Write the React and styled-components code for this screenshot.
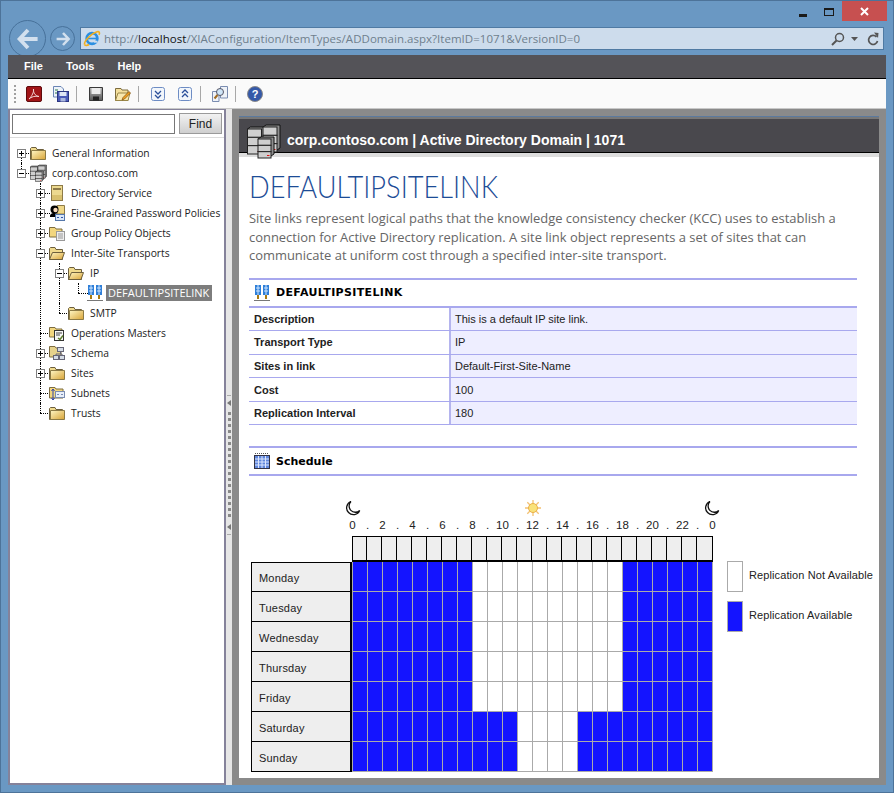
import React from 'react';
import styled, { createGlobalStyle } from 'styled-components';

const GlobalStyle = createGlobalStyle`
  html, body { margin: 0; padding: 0; background: #6a98c3; }
  * { box-sizing: border-box; }
`;

const Window = styled.div`
  width: 894px;
  height: 793px;
  background: #6a98c3;
  border: 1px solid #4d7399;
  overflow: hidden;
  font-family: "Liberation Sans", Arial, sans-serif;
`;

const TitleBar = styled.div`
  height: 20px;
  display: flex;
  justify-content: flex-end;
  padding-right: 6px;
`;

const WinButton = styled.div`
  width: ${p => p.$w}px;
  height: 20px;
  padding-top: ${p => p.$pad || 0}px;
  display: flex;
  align-items: center;
  justify-content: center;
  background: ${p => p.$bg || 'transparent'};
`;

const NavBar = styled.div`
  height: 34px;
  display: flex;
  align-items: flex-start;
  padding-left: 8px;
`;

const RoundButton = styled.div`
  width: ${p => p.$size}px;
  height: ${p => p.$size}px;
  flex: none;
  margin-top: ${p => p.$top}px;
  margin-right: ${p => p.$right}px;
  border: 1px solid #47719a;
  border-radius: 50%;
  display: flex;
  align-items: center;
  justify-content: center;
`;

const AddressBar = styled.div`
  width: 804px;
  height: 23px;
  margin-top: 6px;
  background: #cddcec;
  border: 1px solid #4f7aa3;
  display: flex;
  align-items: center;
  padding: 0 4px 0 2px;
`;

const Url = styled.div`
  flex: 1;
  margin-left: 3px;
  font-family: "Open Sans", sans-serif;
  font-size: 11.5px;
  letter-spacing: 0.03px;
  color: #6f7f8c;
  white-space: nowrap;
  b { font-weight: 400; color: #111; }
`;

const AppFrame = styled.div`
  position: relative;
  width: 878px;
  margin-left: 7px;
`;

const MenuBar = styled.div`
  height: 24px;
  background: #545358;
  border-bottom: 1px solid #000;
  display: flex;
  align-items: center;
  gap: 23px;
  padding: 0 0 2px 16px;
  color: #fff;
  font-size: 11px;
  font-weight: 700;
`;

const Toolbar = styled.div`
  height: 30px;
  background: #fafafa;
  border-bottom: 1px solid #c8c8c8;
  display: flex;
  align-items: center;
  padding-left: 6px;
`;

const Grip = styled.div`
  width: 2px;
  height: 18px;
  margin-right: 4px;
  background: repeating-linear-gradient(to bottom, #a0a0a0 0 2px, transparent 2px 4px);
`;

const ToolSlot = styled.div`
  width: 27px;
  height: 18px;
  display: flex;
  align-items: center;
  justify-content: center;
`;

const ToolSep = styled.div`
  width: 1px;
  height: 16px;
  margin: 0 5px 0 2px;
  background: #a8a8a8;
`;

const Body = styled.div`
  height: 676px;
  display: flex;
  background: #8a8a8a;
`;

const LeftPanel = styled.div`
  width: 218px;
  flex: none;
  background: #fff;
  border: 2px solid #85829a;
  border-top-width: 1px;
  display: flex;
  flex-direction: column;
`;

const SearchRow = styled.div`
  height: 28px;
  flex: none;
  display: flex;
  align-items: flex-start;
  padding: 3px 0 0 2px;
  gap: 4px;
  border-bottom: 1px solid #dcdcdc;
`;

const SearchInput = styled.input`
  width: 163px;
  height: 20px;
  margin-top: 1px;
  border: 1px solid #777;
  background: #fff;
  outline: none;
`;

const FindButton = styled.button`
  width: 43px;
  height: 21px;
  padding: 0;
  border: 1px solid #9a9a9a;
  background: linear-gradient(#f2f2f2, #cfcfcf);
  font-family: "Liberation Sans", Arial, sans-serif;
  font-size: 12px;
  color: #222;
`;

const Tree = styled.div`
  padding: 5px 0 0 2px;
`;

const TreeRowBox = styled.div`
  height: 20px;
  display: flex;
  align-items: center;
`;

const Guide = styled.div`
  width: 19px;
  height: 20px;
  flex: none;
  position: relative;
  &::before {
    content: ${p => (p.$line ? '""' : 'none')};
    position: absolute;
    left: 9px;
    top: 0;
    bottom: 0;
    border-left: 1px dotted #000;
  }
`;

const Joint = styled.div`
  width: 19px;
  height: 20px;
  flex: none;
  position: relative;
  &::before {
    content: "";
    position: absolute;
    left: 9px;
    top: ${p => (p.$kind === 'first' ? '10px' : '0')};
    bottom: ${p => (p.$kind === 'last' ? '10px' : '0')};
    border-left: 1px dotted #000;
  }
  &::after {
    content: "";
    position: absolute;
    left: 9px;
    top: 10px;
    width: 10px;
    border-top: 1px dotted #000;
  }
`;

const Expander = styled.span`
  position: absolute;
  z-index: 1;
  left: 5px;
  top: 6px;
  width: 9px;
  height: 9px;
  background: #fff;
  border: 1px solid #808080;
  &::before {
    content: "";
    position: absolute;
    left: 1px;
    top: 3px;
    width: 5px;
    height: 1px;
    background: #000;
  }
  &::after {
    content: ${p => (p.$open ? 'none' : '""')};
    position: absolute;
    left: 3px;
    top: 1px;
    width: 1px;
    height: 5px;
    background: #000;
  }
`;

const TreeIcon = styled.div`
  width: 16px;
  height: 16px;
  flex: none;
  margin-left: -1px;
  position: relative;
  z-index: 1;
  display: flex;
`;

const TreeLabel = styled.div`
  margin-left: ${p => (p.$selected ? '3px' : '6px')};
  padding: ${p => (p.$selected ? '1px 3px 1px 2px' : '0')};
  font-family: "Open Sans", sans-serif;
  font-size: ${p => (p.$selected ? '11px' : '10.3px')};
  line-height: 14px;
  white-space: nowrap;
  color: ${p => (p.$selected ? '#fff' : '#222')};
  background: ${p => (p.$selected ? '#7d7d7d' : 'transparent')};
`;

const Splitter = styled.div`
  width: 6px;
  flex: none;
  background: #e6e6e6;
  display: flex;
  flex-direction: column;
  align-items: center;
  padding-top: 286px;
`;

const SplitDash = styled.div`
  width: 4px;
  height: 1px;
  background: #aaa;
  margin: ${p => p.$m};
`;

const SplitArrow = styled.div`
  width: 0;
  height: 0;
  border-top: 3px solid transparent;
  border-bottom: 3px solid transparent;
  border-right: 4px solid #777;
`;

const SplitDots = styled.div`
  width: 3px;
  height: 106px;
  margin: 6px 0;
  background: repeating-linear-gradient(to bottom, #888 0 3px, transparent 3px 6px);
`;

const MainArea = styled.div`
  flex: 1;
  min-width: 0;
  padding: 7px;
  display: flex;
`;

const MainPanel = styled.div`
  width: 640px;
  flex: none;
  background: #fff;
  border-top: 1px solid #5c7a9e;
  display: flex;
  flex-direction: column;
`;

const HeaderBand = styled.div`
  height: 40px;
  flex: none;
  background: #777;
  padding-top: 2px;
`;

const HeaderInner = styled.div`
  height: 34px;
  background: #49484d;
  border-bottom: 1px solid #000;
  display: flex;
  align-items: flex-start;
  padding: 6px 0 0 8px;
  color: #fff;
  font-size: 14px;
  font-weight: 700;
  white-space: nowrap;
  span { margin: 7px 0 0 8px; line-height: 16px; }
`;

const Strip = styled.div`
  height: 4px;
  background: #dddddd;
`;

const Content = styled.div`
  flex: 1;
  padding: 0 22px 0 10px;
`;

const PageTitle = styled.h1`
  margin: 10px 0 0;
  font-family: Lato, sans-serif;
  font-weight: 300;
  font-size: 32px;
  line-height: 38px;
  color: #1c4c96;
  white-space: nowrap;
  transform: scaleX(0.85);
  transform-origin: left center;
`;

const Intro = styled.p`
  margin: 4px 0 0;
  width: 600px;
  font-family: "Open Sans", sans-serif;
  font-size: 12.95px;
  line-height: 18.5px;
  color: #666;
`;

const SectionHead = styled.div`
  height: 30px;
  margin-top: ${p => p.$top}px;
  border-top: 2px solid #a8a8ee;
  border-bottom: 2px solid #a8a8ee;
  display: flex;
  align-items: center;
  gap: 6px;
  padding-left: 5px;
  font-family: "DejaVu Sans", sans-serif;
  font-weight: 700;
  font-size: 11px;
  letter-spacing: ${p => p.$track || 0}px;
  color: #000;
`;

const PropRow = styled.div`
  height: 23.6px;
  display: flex;
  border-bottom: 1px solid #a8a8ee;
  font-size: 11px;
  color: #222;
`;

const PropLabel = styled.div`
  width: 200px;
  flex: none;
  padding-left: 5px;
  display: flex;
  align-items: center;
  font-weight: 700;
`;

const PropValue = styled.div`
  flex: 1;
  background: #eeeeff;
  border-left: 2px solid #b4b4ee;
  padding-left: 4px;
  display: flex;
  align-items: center;
`;

const SchedulePane = styled.div`
  margin-top: 24px;
  display: flex;
`;

const TimeAxis = styled.div`
  width: 375px;
  margin-left: 96px;
`;

const SkyIcons = styled.div`
  display: flex;
  justify-content: space-between;
  align-items: center;
  height: 16px;
`;

const HourLabels = styled.div`
  display: flex;
  height: 14px;
  margin: 2px 0 4px;
`;

const HourLabel = styled.div`
  width: 15px;
  flex: none;
  text-align: center;
  font-size: 11.5px;
  line-height: 14px;
  color: #222;
  white-space: nowrap;
`;

const GridWrap = styled.div`
  margin-left: 2px;
`;

const ScheduleGrid = styled.div`
  display: grid;
  grid-template-columns: 101px repeat(23, 15px) 16px;
  grid-template-rows: 26px repeat(7, 30px);
`;

const Corner = styled.div``;

const HeadCell = styled.div`
  background: #eeeeee;
  border: 1px solid #000;
  border-left-width: ${p => (p.$first ? '1px' : '0')};
  border-bottom-width: 2px;
`;

const DayCell = styled.div`
  background: #eeeeee;
  border: 1px solid #000;
  border-top-width: ${p => (p.$first ? '1px' : '0')};
  border-right-width: 2px;
  padding: 2px 0 0 7px;
  display: flex;
  align-items: center;
  font-size: 11px;
  letter-spacing: 0.2px;
  color: #222;
`;

const SlotCell = styled.div`
  background: ${p => (p.$on ? '#1414ff' : '#fff')};
  border-left: 1px solid #aaa;
  border-right: ${p => (p.$last ? '1px solid #aaa' : '0')};
  border-bottom: 1px solid #aaa;
`;

const Legend = styled.div`
  margin-left: 7px;
  padding-top: 61px;
  display: flex;
  flex-direction: column;
  gap: 9px;
`;

const LegendRow = styled.div`
  display: flex;
  align-items: center;
  gap: 6px;
  font-size: 11px;
  letter-spacing: 0.1px;
  color: #222;
  white-space: nowrap;
  padding-bottom: 3px;
`;

const Swatch = styled.div`
  width: 16px;
  height: 31px;
  margin-bottom: -3px;
  background: ${p => (p.$on ? '#1414ff' : '#fff')};
  border: 1px solid #aaa;
`;

const OverflowSvg = styled.svg`
  flex: none;
  overflow: visible;
`;

const FlipSvg = styled.svg`
  transform: ${p => (p.$flip ? 'scaleX(-1)' : 'none')};
`;

const FolderIcon = ({ open }) => (
  <svg width="16" height="16" viewBox="0 0 16 16">
    <defs>
      <linearGradient id="fold" x1="0" y1="0" x2="1" y2="1">
        <stop offset="0" stopColor="#fff6c4" />
        <stop offset="1" stopColor="#d8a437" />
      </linearGradient>
    </defs>
    <path d="M.5 3.500V14.500H13.500V4.500H7L6 2.500H1.500z" fill="#efd98c" stroke="#6d5f3c" />
    {open
      ? <path d="M.5 14.500L3.500 7.500H15.500L13 14.500z" fill="url(#fold)" stroke="#6d5f3c" />
      : <path d="M1.500 5.500H15.500V14.500H1.500z" fill="url(#fold)" stroke="#8c7a45" />}
  </svg>
);

const BookIcon = () => (
  <svg width="16" height="16" viewBox="0 0 16 16">
    <rect x="2.500" y=".5" width="11" height="15" fill="#ecd98f" stroke="#8d7a48" />
    <rect x="4" y="3" width="8" height="2" fill="#8d7a48" />
    <rect x="3" y="10" width="10" height="5" fill="#d8c06e" />
  </svg>
);

const PersonIcon = () => (
  <svg width="16" height="16" viewBox="0 0 16 16">
    <path d="M8 .5H15.500V9H8z" fill="#f0d888" stroke="#8d7a48" />
    <circle cx="5.500" cy="4.500" r="4" fill="#000" />
    <circle cx="6.500" cy="5" r="2.200" fill="#f6d7b8" />
    <path d="M1 11C1 8.500 4 8 5.500 8S9 9 9 10V12H1z" fill="#000" />
    <rect x="6.500" y="9.500" width="9" height="6" fill="#d8e6f8" stroke="#5577aa" />
    <path d="M8 12.500h2M12 12.500h2" stroke="#3355aa" />
  </svg>
);

const PolicyIcon = () => (
  <svg width="16" height="16" viewBox="0 0 16 16">
    <path d="M.5 2.500H6L7 4H13V12H.5z" fill="#f2d67e" stroke="#7d6c3f" />
    <rect x="7.500" y="6.500" width="8" height="9" fill="#eeeeee" stroke="#999" />
    <path d="M9 9h5M9 11h5M9 13h5" stroke="#999" />
  </svg>
);

const OpsIcon = () => (
  <svg width="16" height="16" viewBox="0 0 16 16">
    <path d="M.5 2.500H6L7 4H13V12H.5z" fill="#f2d67e" stroke="#7d6c3f" />
    <rect x="5.500" y="5.500" width="9" height="10" fill="#f5f5f5" stroke="#333" />
    <path d="M7 8h6M7 10h4" stroke="#444" />
    <path d="M9 13l2 1.500 3-4" fill="none" stroke="#5a7a2a" strokeWidth="1.400" />
  </svg>
);

const SchemaIcon = () => (
  <svg width="16" height="16" viewBox="0 0 16 16">
    <path d="M.5 1.500H6L7 3H12V12H.5z" fill="#e6d28c" stroke="#7d6c3f" />
    <rect x="8.500" y="2.500" width="6" height="4" fill="#d5dce6" stroke="#667" />
    <rect x="4.500" y="10.500" width="5" height="4" fill="#d5dce6" stroke="#667" />
    <rect x="10.500" y="10.500" width="5" height="4" fill="#d5dce6" stroke="#667" />
    <path d="M11.500 7v2M7 10V9h6v1" fill="none" stroke="#667" />
  </svg>
);

const SubnetIcon = () => (
  <svg width="16" height="16" viewBox="0 0 16 16">
    <path d="M.5 2.500H6L7 4H14V13H.5z" fill="#f2d67e" stroke="#7d6c3f" />
    <rect x="6.500" y="6.500" width="9" height="6" fill="#e8effa" stroke="#7a8cb0" />
    <path d="M8 9.500h2M12 9.500h2" stroke="#7a8cb0" />
    <path d="M4 4v11M2.500 6L4 4l1.500 2M2.500 13L4 15l1.500-2" fill="none" stroke="#3344aa" />
  </svg>
);

const ServerStack = ({ x, y, w, h }) => {
  const t = h / 3;
  return (
    <g>
      <path d={`M${x} ${y + 2}l3-2h${w - 1}v${h - 2}l-3 2z`} fill="#8e8e8e" stroke="#111" strokeWidth="1" />
      {[0, 1, 2].map(i => (
        <rect key={i} x={x} y={y + 2 + i * t} width={w - 1} height={t} fill="#cfcfcf" stroke="#222" strokeWidth="1" />
      ))}
      <rect x={x + w - 5} y={y + h - 1} width="2.500" height="1" fill="#e01010" />
    </g>
  );
};

const ServerIcon = ({ size = 16 }) => (
  <OverflowSvg width={size} height={size} viewBox="0 0 32 32">
    <ServerStack x={.5} y={2} w={15} h={25} />
    <ServerStack x={16} y={0} w={15} h={25} />
    <ServerStack x={11} y={12} w={14} h={19} />
  </OverflowSvg>
);

const SiteLinkIcon = () => (
  <svg width="16" height="16" viewBox="0 0 16 16">
    <rect x="1" y="0" width="6" height="10" fill="#2f7fd8" />
    <rect x="9" y="0" width="6" height="10" fill="#2f7fd8" />
    <path d="M2 3h4M2 6h4M4 0v10M10 3h4M10 6h4M12 0v10" stroke="#cfe6ff" />
    <path d="M4 10v4M12 10v4" stroke="#a87a10" strokeWidth="2" />
    <path d="M0 15.500h16" stroke="#777" />
  </svg>
);

const CalendarIcon = () => (
  <svg width="16" height="16" viewBox="0 0 16 16">
    <rect x=".5" y="2.500" width="15" height="13" fill="#5f86dc" stroke="#334" />
    <path d="M1 .5h14" stroke="#555" strokeDasharray="1 1" />
    <path d="M1 6h14M1 9h14M1 12h14M4.500 3v12M8 3v12M11.500 3v12" stroke="#dbe6ff" />
  </svg>
);

const PdfIcon = () => (
  <svg width="16" height="16" viewBox="0 0 16 16">
    <rect x=".5" y=".5" width="15" height="15" rx="1.500" fill="#a11417" stroke="#5e0a0c" />
    <path d="M3 13C6 10 8 6 7.500 3 7 6 9 10 13 10.500 9 9.500 5 11 3 13z" fill="none" stroke="#f3d6d6" />
  </svg>
);

const SaveAllIcon = () => (
  <svg width="16" height="16" viewBox="0 0 16 16">
    <path d="M.5 .5H8L10.500 3V11H.5z" fill="#eef3fa" stroke="#6a85b5" />
    <path d="M2 4h3M2 7h2" stroke="#2d7a4a" />
    <rect x="4.500" y="5.500" width="11" height="10" fill="#4a5ab8" stroke="#2a3480" />
    <rect x="6.500" y="6" width="7" height="4" fill="#dfe6f5" />
    <rect x="7.500" y="12" width="5" height="3.500" fill="#aab6dd" />
  </svg>
);

const FloppyIcon = () => (
  <svg width="16" height="16" viewBox="0 0 16 16">
    <defs>
      <linearGradient id="flop" x1="0" y1="0" x2="0" y2="1">
        <stop offset="0" stopColor="#b5b5b5" />
        <stop offset="1" stopColor="#5a5a5a" />
      </linearGradient>
    </defs>
    <path d="M1.500 1.500H14.500V14.500H1.500z" fill="url(#flop)" stroke="#3a3a3a" />
    <rect x="3.500" y="2" width="9" height="6" fill="#ececec" />
    <rect x="5" y="10.500" width="6" height="4" fill="#222" />
  </svg>
);

const FolderEditIcon = () => (
  <svg width="16" height="16" viewBox="0 0 16 16">
    <path d="M.5 2.500H6L7 4H13V14.500H.5z" fill="#f4df9c" stroke="#7d6c3f" />
    <path d="M.5 14.500L3 7H15L13 14.500z" fill="#f8e7ae" stroke="#9a8748" />
    <path d="M7 14L8 11.500 14 5.500 15.500 7 9.500 13z" fill="#f0a020" stroke="#7a4a10" strokeWidth=".7" />
  </svg>
);

const ChevronBox = ({ up }) => (
  <svg width="14" height="14" viewBox="0 0 14 14">
    <rect x=".5" y=".5" width="13" height="13" rx="2" fill="#f2f6fb" stroke="#6d8cc4" />
    <path d={up ? 'M4 6l3-3 3 3M4 10l3-3 3 3' : 'M4 4l3 3 3-3M4 8l3 3 3-3'} fill="none" stroke="#2a4f9a" strokeWidth="1.300" />
  </svg>
);

const SearchDocIcon = () => (
  <svg width="16" height="16" viewBox="0 0 16 16">
    <path d="M8.500 .5H15.500V12H8.500z" fill="#eef2f8" stroke="#7a8cb0" />
    <path d="M.5 5.500H7V15.500H.5z" fill="#eef2f8" stroke="#7a8cb0" />
    <circle cx="8" cy="6" r="3.500" fill="#cfe5f7" stroke="#556" />
    <path d="M5.500 9L2.500 12.500" stroke="#a06a20" strokeWidth="2" />
  </svg>
);

const HelpIcon = () => (
  <svg width="16" height="16" viewBox="0 0 16 16">
    <circle cx="8" cy="8" r="7.500" fill="#3559a8" stroke="#8a8a8a" />
    <text x="8" y="12" textAnchor="middle" fontSize="11" fontWeight="700" fontFamily="Liberation Sans" fill="#fff">?</text>
  </svg>
);

const IeIcon = () => (
  <svg width="18" height="17" viewBox="0 0 18 17">
    <circle cx="9" cy="8.500" r="5.300" fill="none" stroke="#2b8fe0" strokeWidth="2.800" />
    <path d="M5 8.500h8" stroke="#2b8fe0" strokeWidth="1.600" />
    <path d="M11 11.700h3.500" stroke="#cddcec" strokeWidth="2" />
    <path d="M1.500 14.500C1 11 8 3.500 14 1.800c2.500-.6 3 1 2 3" fill="none" stroke="#f2b01e" strokeWidth="1.600" />
    <path d="M1.500 14.500C2 16 4.500 15.500 6 14.500" fill="none" stroke="#f2b01e" strokeWidth="1.600" />
  </svg>
);

const ArrowIcon = ({ size, right }) => (
  <FlipSvg width={size} height={size} viewBox="0 0 20 20" $flip={right}>
    <path d="M10 2.500L3 10l7 7.500M3.500 10H18" fill="none" stroke="#d3e0ee" strokeWidth="3.200" />
  </FlipSvg>
);

const Magnifier = () => (
  <svg width="14" height="14" viewBox="0 0 14 14">
    <circle cx="8.500" cy="5.500" r="4" fill="none" stroke="#555" strokeWidth="1.500" />
    <path d="M5.500 8.500L1 13" stroke="#555" strokeWidth="2" />
  </svg>
);

const Refresh = () => (
  <svg width="12" height="14" viewBox="0 0 12 14">
    <path d="M9.500 5A4.500 4.500 0 1 0 10.500 9" fill="none" stroke="#555" strokeWidth="1.700" />
    <path d="M7 .5L11.500 1 11 6z" fill="#555" />
  </svg>
);

const Caret = () => (
  <svg width="7" height="4" viewBox="0 0 7 4"><path d="M0 0h7L3.500 4z" fill="#555" /></svg>
);

const AddressTools = styled.div`
  display: flex;
  align-items: center;
  gap: 6px;
  svg:last-child { margin-left: 3px; }
`;

const Moon = () => (
  <svg width="16" height="16" viewBox="0 0 16 16">
    <path d="M6 1.500A6.800 6.800 0 1 0 14.700 10.500 6.200 6.200 0 0 1 6 1.500z" fill="#fff" stroke="#111" strokeWidth="1.300" />
  </svg>
);

const Sun = () => (
  <svg width="16" height="16" viewBox="0 0 16 16">
    <path d="M8 0v16M0 8h16M2.300 2.300l11.400 11.400M13.700 2.300L2.300 13.700" stroke="#f3c173" strokeWidth="1.300" />
    <circle cx="8" cy="8" r="4.500" fill="#f9e27a" stroke="#eab048" />
  </svg>
);

const treeData = [
  { guides: [], kind: 'first', box: '+', icon: <FolderIcon />, label: 'General Information' },
  { guides: [], kind: 'last', box: '-', icon: <ServerIcon />, label: 'corp.contoso.com' },
  { guides: [0], kind: 'tee', box: '+', icon: <BookIcon />, label: 'Directory Service' },
  { guides: [0], kind: 'tee', box: '+', icon: <PersonIcon />, label: 'Fine-Grained Password Policies' },
  { guides: [0], kind: 'tee', box: '+', icon: <PolicyIcon />, label: 'Group Policy Objects' },
  { guides: [0], kind: 'tee', box: '-', icon: <FolderIcon open />, label: 'Inter-Site Transports' },
  { guides: [0, 1], kind: 'tee', box: '-', icon: <FolderIcon open />, label: 'IP' },
  { guides: [0, 1, 1], kind: 'last', icon: <SiteLinkIcon />, label: 'DEFAULTIPSITELINK', selected: true },
  { guides: [0, 1], kind: 'last', icon: <FolderIcon />, label: 'SMTP' },
  { guides: [0], kind: 'tee', icon: <OpsIcon />, label: 'Operations Masters' },
  { guides: [0], kind: 'tee', box: '+', icon: <SchemaIcon />, label: 'Schema' },
  { guides: [0], kind: 'tee', box: '+', icon: <FolderIcon />, label: 'Sites' },
  { guides: [0], kind: 'tee', icon: <SubnetIcon />, label: 'Subnets' },
  { guides: [0], kind: 'last', icon: <FolderIcon />, label: 'Trusts' },
];

const props = [
  ['Description', 'This is a default IP site link.'],
  ['Transport Type', 'IP'],
  ['Sites in link', 'Default-First-Site-Name'],
  ['Cost', '100'],
  ['Replication Interval', '180'],
];

const hours = Array.from({ length: 25 }, (_, i) => {
  if (i === 24) return '0';
  return i % 2 === 0 ? String(i) : '.';
});

const days = ['Monday', 'Tuesday', 'Wednesday', 'Thursday', 'Friday', 'Saturday', 'Sunday'];
const cols = Array.from({ length: 24 }, (_, i) => i);

const isOn = (day, h) => (day < 5 ? h < 8 || h >= 18 : h < 11 || h >= 15);

export default function App() {
  return (
    <Window>
      <GlobalStyle />
      <TitleBar>
        <WinButton $w={26} $pad={8}>
          <svg width="8" height="3"><rect width="8" height="3" fill="#1a1a1a" /></svg>
        </WinButton>
        <WinButton $w={26} $pad={2}>
          <svg width="10" height="8">
            <rect x=".5" y=".5" width="9" height="7" fill="none" stroke="#1a1a1a" />
            <rect width="10" height="2" fill="#1a1a1a" />
          </svg>
        </WinButton>
        <WinButton $w={45} $bg="#c75050">
          <svg width="9" height="9"><path d="M1 1l7 7M8 1L1 8" stroke="#fff" strokeWidth="2" /></svg>
        </WinButton>
      </TitleBar>
      <NavBar>
        <RoundButton $size={37} $top={-1} $right={4}><ArrowIcon size={24} /></RoundButton>
        <RoundButton $size={25} $top={5} $right={5}><ArrowIcon size={16} right /></RoundButton>
        <AddressBar>
          <IeIcon />
          <Url>http://<b>localhost</b>/XIAConfiguration/ItemTypes/ADDomain.aspx?ItemID=1071&amp;VersionID=0</Url>
          <AddressTools>
            <Magnifier />
            <Caret />
            <Refresh />
          </AddressTools>
        </AddressBar>
      </NavBar>
      <AppFrame>
        <MenuBar>
          <span>File</span>
          <span>Tools</span>
          <span>Help</span>
        </MenuBar>
        <Toolbar>
          <Grip />
          <ToolSlot><PdfIcon /></ToolSlot>
          <ToolSlot><SaveAllIcon /></ToolSlot>
          <ToolSep />
          <ToolSlot><FloppyIcon /></ToolSlot>
          <ToolSlot><FolderEditIcon /></ToolSlot>
          <ToolSep />
          <ToolSlot><ChevronBox /></ToolSlot>
          <ToolSlot><ChevronBox up /></ToolSlot>
          <ToolSep />
          <ToolSlot><SearchDocIcon /></ToolSlot>
          <ToolSep />
          <ToolSlot><HelpIcon /></ToolSlot>
        </Toolbar>
        <Body>
          <LeftPanel>
            <SearchRow>
              <SearchInput />
              <FindButton>Find</FindButton>
            </SearchRow>
            <Tree>
              {treeData.map(row => (
                <TreeRowBox key={row.label}>
                  {row.guides.map((g, i) => <Guide key={i} $line={g === 1} />)}
                  <Joint $kind={row.kind}>
                    {row.box && <Expander $open={row.box === '-'} />}
                  </Joint>
                  <TreeIcon>{row.icon}</TreeIcon>
                  <TreeLabel $selected={row.selected}>{row.label}</TreeLabel>
                </TreeRowBox>
              ))}
            </Tree>
          </LeftPanel>
          <Splitter>
            <SplitDash $m="0 0 4px" />
            <SplitArrow />
            <SplitDots />
            <SplitArrow />
            <SplitDash $m="4px 0 0" />
          </Splitter>
          <MainArea>
            <MainPanel>
              <HeaderBand>
                <HeaderInner>
                  <ServerIcon size={32} />
                  <span>corp.contoso.com | Active Directory Domain | 1071</span>
                </HeaderInner>
                <Strip />
              </HeaderBand>
              <Content>
                <PageTitle>DEFAULTIPSITELINK</PageTitle>
                <Intro>
                  Site links represent logical paths that the knowledge consistency checker (KCC) uses to establish a connection for Active Directory replication. A site link object represents a set of sites that can communicate at uniform cost through a specified inter-site transport.
                </Intro>
                <SectionHead $top={13} $track={0.35}><SiteLinkIcon />DEFAULTIPSITELINK</SectionHead>
                {props.map(([k, v]) => (
                  <PropRow key={k}>
                    <PropLabel>{k}</PropLabel>
                    <PropValue>{v}</PropValue>
                  </PropRow>
                ))}
                <SectionHead $top={21}><CalendarIcon />Schedule</SectionHead>
                <SchedulePane>
                  <div>
                    <TimeAxis>
                      <SkyIcons>
                        <Moon />
                        <Sun />
                        <Moon />
                      </SkyIcons>
                      <HourLabels>
                        {hours.map((h, i) => <HourLabel key={i}>{h}</HourLabel>)}
                      </HourLabels>
                    </TimeAxis>
                    <GridWrap>
                      <ScheduleGrid>
                        <Corner />
                        {cols.map(h => <HeadCell key={h} $first={h === 0} />)}
                        {days.map((d, di) => (
                          <React.Fragment key={d}>
                            <DayCell $first={di === 0}>{d}</DayCell>
                            {cols.map(h => <SlotCell key={h} $on={isOn(di, h)} $last={h === 23} />)}
                          </React.Fragment>
                        ))}
                      </ScheduleGrid>
                    </GridWrap>
                  </div>
                  <Legend>
                    <LegendRow><Swatch />Replication Not Available</LegendRow>
                    <LegendRow><Swatch $on />Replication Available</LegendRow>
                  </Legend>
                </SchedulePane>
              </Content>
            </MainPanel>
          </MainArea>
        </Body>
      </AppFrame>
    </Window>
  );
}
